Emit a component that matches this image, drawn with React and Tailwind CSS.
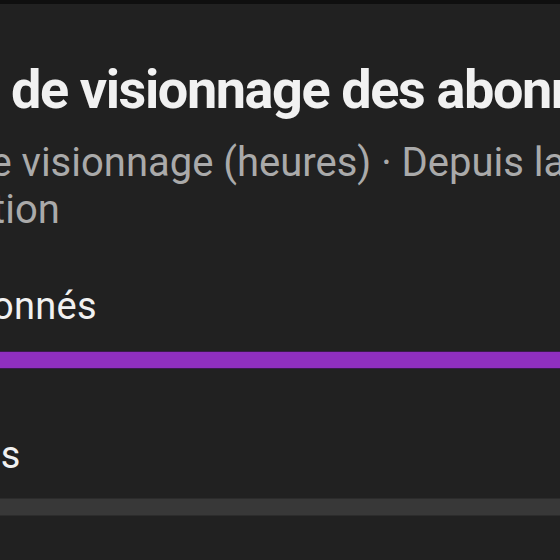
import React from "react";

const rows = [
  { label: "Non abonnés", value: 100, fill: "bg-[#902fbf]", edge: "border-[#3a1a4a]" },
  { label: "Abonnés", value: 0, fill: "bg-[#383838]", edge: "border-[#2c2c2c]" },
];

function BarRow({ row, first }) {
  return (
    <div className={first ? "mt-[51px]" : "mt-[64px]"}>
      <div className="pl-[15px] text-[38px] leading-[44px] tracking-[0.3px] text-[#f1f1f1]">{row.label}</div>
      <div className={`h-[18px] w-full border-y ${row.edge} bg-[#383838] ${first ? "mt-[23px]" : "mt-[21px]"}`}>
        <div className={`h-full ${row.fill}`} style={{ width: `${Math.max(row.value, 0)}%` }} />
      </div>
    </div>
  );
}

export default function App() {
  return (
    <div className="h-[560px] w-[560px] overflow-hidden bg-[#212121]" style={{ fontFamily: "Roboto, 'Noto Sans', sans-serif" }}>
      <div className="h-[4px] bg-[#0f0f0f]" />
      <div className="-ml-[146px] w-[900px] pt-[54px]">
        <div className="ml-[9px] whitespace-nowrap text-[54px] font-bold leading-[64px] tracking-[-1.4px] text-[#f1f1f1]">
          Durée de visionnage des abonnés
        </div>
        <div className="mt-[17px] whitespace-nowrap text-[40px] leading-[47px] text-[#aaaaaa]">
          <div>Durée de visionnage (heures) · Depuis la</div>
          <div className="ml-[9px]">publication</div>
        </div>
        {rows.map((r, i) => (
          <BarRow key={r.label} row={r} first={i === 0} />
        ))}
      </div>
    </div>
  );
}
